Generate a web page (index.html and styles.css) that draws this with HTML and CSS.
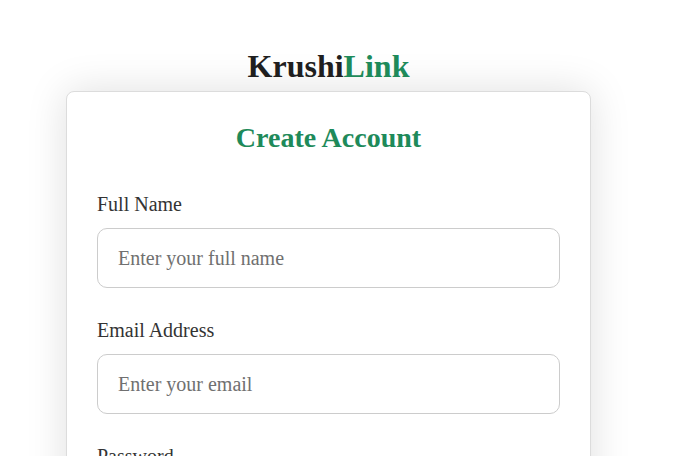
FILE: index.html
```html
<!DOCTYPE html>
<html lang="en">
<head>
<meta charset="utf-8">
<title>KrushiLink - Create Account</title>
<link rel="stylesheet" href="styles.css">
</head>
<body>
<div class="wrap">
  <h1 class="brand">Krushi<span class="brand-accent">Link</span></h1>
  <div class="card">
    <h2 class="card-title">Create Account</h2>
    <form class="form">
      <div class="group">
        <label class="label" for="name">Full Name</label>
        <input class="input" id="name" type="text" placeholder="Enter your full name">
      </div>
      <div class="group">
        <label class="label" for="email">Email Address</label>
        <input class="input" id="email" type="email" placeholder="Enter your email">
      </div>
      <div class="group">
        <label class="label" for="pw">Password</label>
        <input class="input" id="pw" type="password" placeholder="Enter your password">
      </div>
    </form>
  </div>
</div>
</body>
</html>
```
FILE: styles.css
```css
html, body {
  margin: 0;
  padding: 0;
  background: #ffffff;
  font-family: "Liberation Serif", "Times New Roman", serif;
  color: #333333;
}
.wrap {
  width: 525px;
  margin-left: 66px;
  padding-top: 48px;
}
.brand {
  margin: 0 0 6px;
  font-size: 32px;
  font-weight: bold;
  text-align: center;
  color: #1f1f1f;
  line-height: normal;
}
.brand-accent {
  color: #1e8a5a;
}
.card {
  background: #ffffff;
  border: 1px solid #dcdcdc;
  border-radius: 8px;
  box-shadow: 0 0 40px rgba(0, 0, 0, 0.13);
  padding: 30px 30px 40px;
}
.card-title {
  margin: 0 0 39px;
  font-size: 28px;
  font-weight: bold;
  text-align: center;
  color: #1e8a5a;
  line-height: normal;
}
.form {
  display: flex;
  flex-direction: column;
  gap: 31px;
}
.group {
  display: flex;
  flex-direction: column;
  gap: 12px;
}
.label {
  font-size: 20px;
  line-height: 23px;
  color: #333333;
}
.input {
  box-sizing: border-box;
  width: 100%;
  height: 60px;
  padding: 0 20px;
  border: 1px solid #cccccc;
  border-radius: 10px;
  font-family: inherit;
  font-size: 20px;
  color: #333333;
  background: #ffffff;
  outline: none;
}
.input::placeholder {
  color: #707070;
}
```
